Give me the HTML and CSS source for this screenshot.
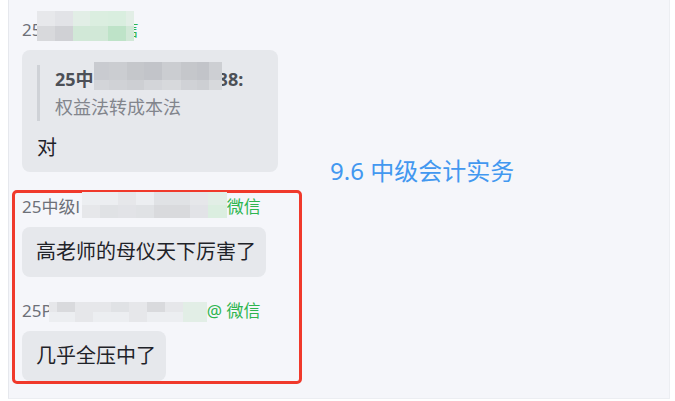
FILE: index.html
```html
<!DOCTYPE html>
<html lang="zh-CN">
<head>
    <meta charset="UTF-8">
    <meta name="viewport" content="width=device-width, initial-scale=1.0">
    <title>群聊记录</title>
    <link rel="stylesheet" href="styles.css">
</head>
<body>
    <div class="chat-panel">
        <div class="feed">
            <!-- 引用回复 -->
            <div class="msg">
                <div class="sender">
                    <span>25</span>
                    <div class="mosaic mosaic-a">
                        <span class="s1"></span><span class="s2"></span><span class="g1"></span><span class="g2"></span><span class="g3"></span><span class="g1"></span>
                        <span class="s4"></span><span class="s5"></span><span class="g4"></span><span class="g4"></span><span class="g5"></span><span class="g4"></span>
                    </div>
                    <span class="wx wx-tail">信</span>
                </div>
                <div class="bubble quote-bubble">
                    <div class="quote">
                        <div class="quote-name">
                            <span>25中</span>
                            <div class="mosaic mosaic-d">
                                <span class="q1"></span><span class="q2"></span><span class="q3"></span><span class="q4"></span><span class="q2"></span><span class="q3"></span><span class="q4"></span><span class="q5"></span>
                                <span class="q6"></span><span class="q7"></span><span class="q5"></span><span class="q6"></span><span class="q8"></span><span class="q7"></span><span class="q5"></span><span class="q8"></span>
                            </div>
                            <span class="quote-tail">88:</span>
                        </div>
                        <div class="quote-text">权益法转成本法</div>
                    </div>
                    <div class="bubble-text">对</div>
                </div>
            </div>

            <!-- 标记出来的两条 -->
            <div class="highlight">
                <div class="msg">
                    <div class="sender">
                        <span>25中级l</span>
                        <div class="mosaic mosaic-b">
                            <span class="l1"></span><span class="l1"></span><span class="l2"></span><span class="l1"></span><span class="l3"></span><span class="l3"></span><span class="l2"></span><span class="g1"></span>
                            <span class="l2"></span><span class="l3"></span><span class="s2"></span><span class="l3"></span><span class="s3"></span><span class="s3"></span><span class="s2"></span><span class="g2"></span>
                        </div>
                        <span class="wx">微信</span>
                    </div>
                    <div class="bubble">高老师的母仪天下厉害了</div>
                </div>

                <div class="msg msg-next">
                    <div class="sender">
                        <span>25P</span>
                        <div class="mosaic mosaic-c">
                            <span class="l2"></span><span class="s3"></span><span class="l2"></span><span class="l2"></span><span class="l3"></span><span class="l2"></span><span class="s3"></span><span class="l2"></span><span class="g1"></span>
                            <span class="l1"></span><span class="l1"></span><span class="l2"></span><span class="l1"></span><span class="l1"></span><span class="l2"></span><span class="l1"></span><span class="l1"></span><span class="g1"></span>
                        </div>
                        <span class="wx">@ 微信</span>
                    </div>
                    <div class="bubble">几乎全压中了</div>
                </div>
            </div>
        </div>

        <div class="topic">9.6 中级会计实务</div>
    </div>
</body>
</html>
```

FILE: styles.css
```css
:root {
    --panel-bg: #f5f6fa;
    --bubble-bg: #e6e8ec;
    --text-color: #1f2329;
    --name-color: #6d7078;
    --wx-green: #2eb54f;
    --mark-red: #f0392b;
    --topic-blue: #4298f0;
}

body {
    margin: 0;
    background: #fff;
    font-family: "Noto Sans", "Noto Sans CJK SC", sans-serif;
    color: var(--text-color);
}

.chat-panel {
    display: flex;
    width: 662px;
    height: 399px;
    margin-left: 8px;
    box-sizing: border-box;
    background: var(--panel-bg);
    border-left: 1px solid #e6e8ed;
    border-right: 1px solid #eceef2;
    border-bottom: 1px solid #eceef2;
}

.feed {
    width: 300px;
    padding: 18px 0 0 3px;
    box-sizing: border-box;
}

.feed > .msg {
    padding-left: 10px;
}

.sender {
    display: flex;
    align-items: center;
    height: 24px;
    font-size: 17px;
    line-height: 24px;
    color: var(--name-color);
    white-space: nowrap;
}

.wx {
    color: var(--wx-green);
}

.wx-tail {
    margin-left: -13px;
}

.bubble {
    display: inline-block;
    margin-top: 8px;
    padding: 11px 10px 11px 14px;
    background: var(--bubble-bg);
    border-radius: 8px;
    font-size: 20px;
    line-height: 28px;
}

.quote-bubble {
    display: block;
    width: 256px;
    box-sizing: border-box;
    padding: 15px 15px 10px 15px;
}

.quote {
    border-left: 3px solid #cfd2d7;
    padding-left: 15px;
    margin-bottom: 13px;
    font-size: 18px;
    line-height: 28px;
}

.quote-name {
    display: flex;
    align-items: center;
    font-weight: bold;
    color: #4d5057;
    white-space: nowrap;
}

.quote-tail {
    margin-left: -4px;
}

.quote-text {
    color: #82858c;
}

.bubble-text {
    line-height: 28px;
}

.highlight {
    width: 290px;
    box-sizing: border-box;
    margin-top: 18px;
    padding: 2px 0 0 7px;
    border: 3px solid var(--mark-red);
    border-radius: 5px;
}

.msg-next {
    margin-top: 22px;
}

.topic {
    padding: 155px 0 0 21px;
    font-size: 24px;
    line-height: 32px;
    color: var(--topic-blue);
    white-space: nowrap;
}

/* 打码 */
.mosaic {
    display: grid;
    flex: none;
    z-index: 1;
}

.mosaic-a {
    grid-template-columns: 18px 18px 17px 18px 18px 8px;
    grid-template-rows: 15px 15px;
    margin: -10px 0 -2px -4px;
}

.mosaic-b {
    grid-template-columns: 18px 18px 18px 18px 18px 18px 18px 19px;
    grid-template-rows: 13px 13px;
    margin: -4px 0 0 2px;
}

.mosaic-c {
    grid-template-columns: 8px 18px 18px 18px 18px 18px 18px 18px 24px;
    grid-template-rows: 10px 10px;
    margin: 1px 0 -1px -3px;
}

.mosaic-d {
    grid-template-columns: 15px 18px 17px 18px 19px 16px 12px 13px;
    grid-template-rows: 18px 10px;
    margin: -6px 0 0 0;
}

.s1 { background: #e7e8eb; }
.s2 { background: #e2e3e7; }
.s3 { background: #d9dadd; }
.s4 { background: #d8d9dc; }
.s5 { background: #d0d1d5; }
.l1 { background: #eceef1; }
.l2 { background: #e6e7ea; }
.l3 { background: #e0e2e5; }
.g1 { background: #e2eee6; }
.g2 { background: #dbeee0; }
.g3 { background: #d9eedf; }
.g4 { background: #d1e8d7; }
.g5 { background: #bee3c8; }
.q1 { background: #c9cbd0; }
.q2 { background: #cbcdd1; }
.q3 { background: #c5c7cb; }
.q4 { background: #c2c4c9; }
.q5 { background: #cdcfd3; }
.q6 { background: #d3d5d9; }
.q7 { background: #d0d2d6; }
.q8 { background: #d7d9dc; }
```
